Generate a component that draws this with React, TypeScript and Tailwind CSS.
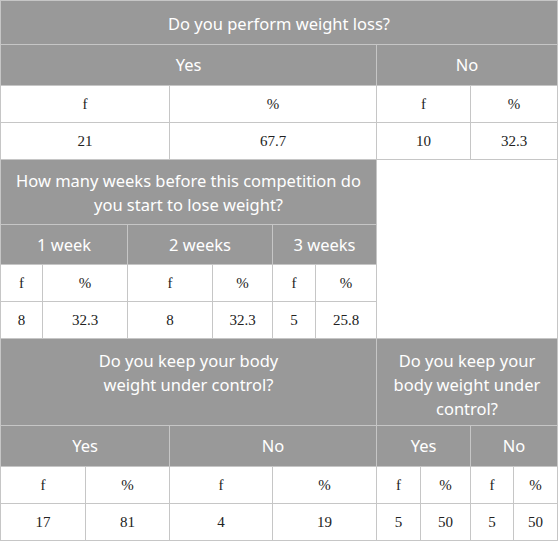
import React from "react";

const H = "bg-[#999999] text-white text-[16.5px] leading-[24px] text-center font-sans";
const D = "bg-white text-[#222] text-[15px] text-center flex items-center justify-center [font-family:Liberation_Serif]";

function Hd({ c, span, extra = "" }: { c: React.ReactNode; span: string; extra?: string }) {
  return <div className={`${H} ${span} ${extra}`}>{c}</div>;
}
function Sub({ c, span }: { c: string; span: string }) {
  return <div className={`${H} ${span} flex items-center justify-center`}>{c}</div>;
}
function Dc({ c, span }: { c: string; span: string }) {
  return <div className={`${D} ${span}`}>{c}</div>;
}

export default function App() {
  return (
    <div className="w-[558px] h-[541px] bg-white">
      <div className="grid gap-px p-px bg-[#c6c6c6] grid-cols-[41px_42px_41px_41px_42px_59px_42px_60px_43px_49px_42px_43px] grid-rows-[43px_40px_36px_36px_64px_39px_36px_36px_86px_40px_36px_36px] w-[558px]">
        {/* Section 1 */}
        <Hd span="col-span-12" extra="pt-[11px]" c="Do you perform weight loss?" />
        <Sub span="col-span-8" c="Yes" />
        <Sub span="col-span-4" c="No" />
        <Dc span="col-span-4" c="f" />
        <Dc span="col-span-4" c="%" />
        <Dc span="col-span-2" c="f" />
        <Dc span="col-span-2" c="%" />
        <Dc span="col-span-4" c="21" />
        <Dc span="col-span-4" c="67.7" />
        <Dc span="col-span-2" c="10" />
        <Dc span="col-span-2" c="32.3" />

        {/* Section 2 */}
        <Hd
          span="col-span-8"
          extra="pt-[9px]"
          c={
            <>
              How many weeks before this competition do
              <br />
              you start to lose weight?
            </>
          }
        />
        <div className="bg-white col-span-4 row-span-4" />
        <Sub span="col-span-3" c="1 week" />
        <Sub span="col-span-3" c="2 weeks" />
        <Sub span="col-span-2" c="3 weeks" />
        <Dc span="col-span-1" c="f" />
        <Dc span="col-span-2" c="%" />
        <Dc span="col-span-2" c="f" />
        <Dc span="col-span-1" c="%" />
        <Dc span="col-span-1" c="f" />
        <Dc span="col-span-1" c="%" />
        <Dc span="col-span-1" c="8" />
        <Dc span="col-span-2" c="32.3" />
        <Dc span="col-span-2" c="8" />
        <Dc span="col-span-1" c="32.3" />
        <Dc span="col-span-1" c="5" />
        <Dc span="col-span-1" c="25.8" />

        {/* Section 3 */}
        <Hd
          span="col-span-8"
          extra="pt-[10px]"
          c={
            <>
              Do you keep your body
              <br />
              weight under control?
            </>
          }
        />
        <Hd
          span="col-span-4"
          extra="pt-[10px]"
          c={
            <>
              Do you keep your
              <br />
              body weight under
              <br />
              control?
            </>
          }
        />
        <Sub span="col-span-4" c="Yes" />
        <Sub span="col-span-4" c="No" />
        <Sub span="col-span-2" c="Yes" />
        <Sub span="col-span-2" c="No" />
        <Dc span="col-span-2" c="f" />
        <Dc span="col-span-2" c="%" />
        <Dc span="col-span-2" c="f" />
        <Dc span="col-span-2" c="%" />
        <Dc span="col-span-1" c="f" />
        <Dc span="col-span-1" c="%" />
        <Dc span="col-span-1" c="f" />
        <Dc span="col-span-1" c="%" />
        <Dc span="col-span-2" c="17" />
        <Dc span="col-span-2" c="81" />
        <Dc span="col-span-2" c="4" />
        <Dc span="col-span-2" c="19" />
        <Dc span="col-span-1" c="5" />
        <Dc span="col-span-1" c="50" />
        <Dc span="col-span-1" c="5" />
        <Dc span="col-span-1" c="50" />
      </div>
    </div>
  );
}
